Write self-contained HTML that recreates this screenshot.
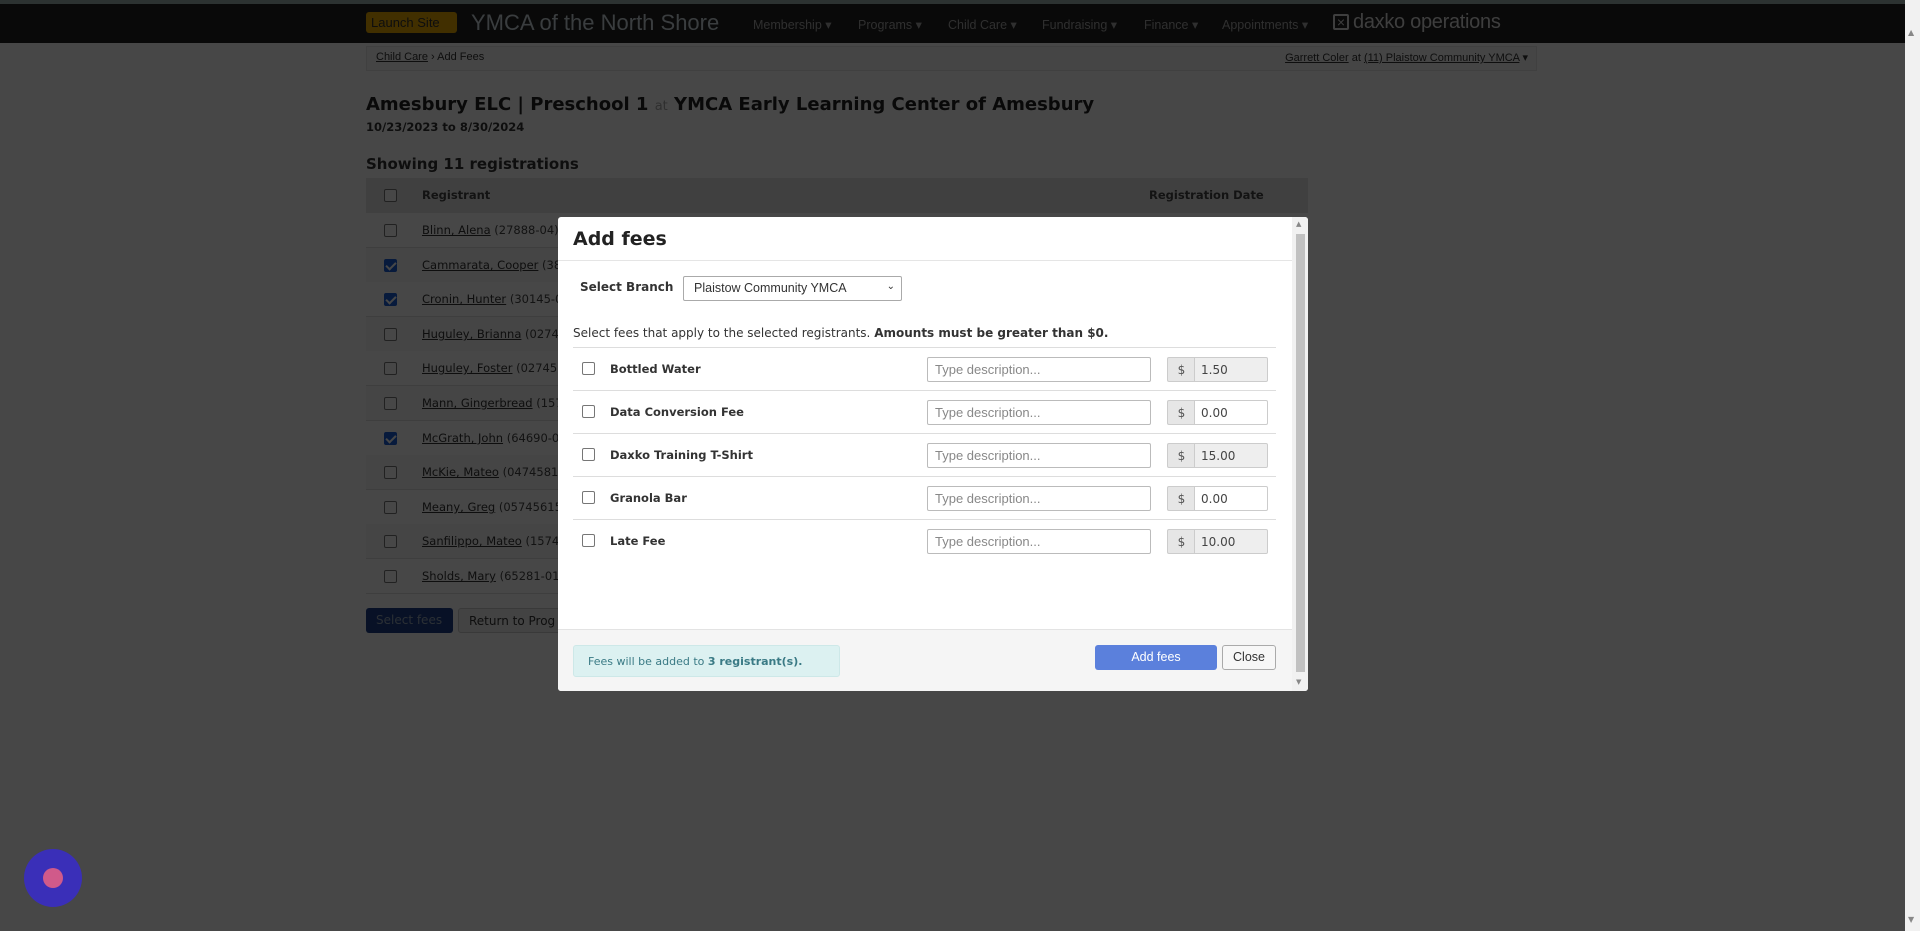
<!DOCTYPE html>
<html><head><meta charset="utf-8"><style>
*{box-sizing:border-box;margin:0;padding:0}
body{width:1920px;height:931px;overflow:hidden;background:#fff;font-family:"DejaVu Sans","Liberation Sans",sans-serif;position:relative;color:#333}
.a{position:absolute;white-space:nowrap}
.nav{left:0;top:4px;width:1920px;height:39px;background:#202020}
.topstrip{left:0;top:0;width:1920px;height:4px;background:#9fb5b0}
.ni{top:17px;font-size:12.5px;color:#aaa;font-family:"Liberation Sans",sans-serif}
.row{left:366px;width:942px;height:35px;border-bottom:1px solid #ddd;background:#fff}
.row.alt{background:#f7f7f7}
.cb{position:absolute;left:18px;top:11px;width:13px;height:13px;border:1px solid #777;border-radius:2px;background:#fff}
.cb.on{background:#1a5fd6;border-color:#1a5fd6}
.cb.on:after{content:"";position:absolute;left:3px;top:0px;width:4px;height:8px;border:solid #fff;border-width:0 2px 2px 0;transform:rotate(45deg)}
.rn{position:absolute;left:56px;top:10px;font-size:11.5px;color:#444}
.rn u{color:#333}
.ov{left:0;top:0;width:1920px;height:931px;background:rgba(0,0,0,.72)}
.modal{left:558px;top:217px;width:750px;height:474px;background:#fff;border-radius:3px;overflow:hidden}
.fr{position:absolute;left:15px;width:703px;height:43px;border-top:1px solid #ddd}
.fr .c{position:absolute;left:9px;top:14px;width:13px;height:13px;border:1px solid #767676;border-radius:2px}
.fr .l{position:absolute;left:37px;top:14px;font-size:11.5px;font-weight:bold;color:#333}
.fr .d{position:absolute;left:354px;top:9px;width:224px;height:25px;border:1px solid #bbb;border-radius:2px;font-size:13px;color:#888;padding:4px 7px;font-family:"Liberation Sans",sans-serif}
.fr .s{position:absolute;left:594px;top:9px;width:28px;height:25px;border:1px solid #ccc;border-right:none;background:#e6e6e6;border-radius:2px 0 0 2px;font-size:12px;color:#555;text-align:center;padding-top:5px}
.fr .v{position:absolute;left:621px;top:9px;width:74px;height:25px;border:1px solid #ccc;border-radius:0 2px 2px 0;font-size:12px;color:#444;padding:5px 6px}
.fr .v.g{background:#eee}
</style></head><body>
<div class="a topstrip"></div>
<div class="a nav"></div>
<div class="a" style="left:366px;top:12px;width:91px;height:21px;background:#e8a800;border-radius:3px;font-size:13px;color:#333;padding:3px 5px;font-family:'Liberation Sans',sans-serif">Launch Site</div>
<div class="a" style="left:471px;top:10px;font-size:22px;color:#cfdbe0;font-family:'Liberation Sans',sans-serif">YMCA of the North Shore</div>
<div class="a ni" style="left:753px">Membership ▾</div>
<div class="a ni" style="left:858px">Programs ▾</div>
<div class="a ni" style="left:948px">Child Care ▾</div>
<div class="a ni" style="left:1042px">Fundraising ▾</div>
<div class="a ni" style="left:1144px">Finance ▾</div>
<div class="a ni" style="left:1222px">Appointments ▾</div>
<div class="a" style="left:1333px;top:14px;width:16px;height:16px;border:2px solid #ddd;border-radius:2px;color:#ddd;font-size:14px;line-height:12px;text-align:center;font-family:'Liberation Sans',sans-serif">×</div>
<div class="a" style="left:1353px;top:11px;font-size:20px;color:#ddd;font-family:'Liberation Sans',sans-serif;letter-spacing:-0.3px">daxko operations</div>
<div class="a" style="left:366px;top:46px;width:1171px;height:25px;background:#f6f6f6;border:1px solid #e4e4e4"></div>
<div class="a" style="left:376px;top:51px;font-size:11px;color:#333;font-family:'Liberation Sans',sans-serif"><u>Child Care</u> › Add Fees</div>
<div class="a" style="right:392px;top:51px;font-size:11px;color:#333;font-family:'Liberation Sans',sans-serif"><u>Garrett Coler</u> at <u>(11) Plaistow Community YMCA</u> ▾</div>
<div class="a" style="left:366px;top:94px;font-size:18px;font-weight:bold;color:#222">Amesbury ELC | Preschool 1 <span style="font-weight:normal;color:#aaa;font-size:13px">at</span> YMCA Early Learning Center of Amesbury</div>
<div class="a" style="left:366px;top:120px;font-size:11.5px;font-weight:bold;color:#333">10/23/2023 to 8/30/2024</div>
<div class="a" style="left:366px;top:155px;font-size:15px;font-weight:bold;color:#333">Showing 11 registrations</div>
<div class="a" style="left:366px;top:178px;width:942px;height:35px;background:#e5e5e5"><div class="cb"></div><div class="rn" style="font-weight:bold">Registrant</div><div style="position:absolute;left:783px;top:10px;font-size:11.5px;font-weight:bold;color:#444">Registration Date</div></div>
<div class="a row" style="top:213px"><div class="cb"></div><div class="rn"><u>Blinn, Alena</u> (27888-04)</div></div>
<div class="a row alt" style="top:248px"><div class="cb on"></div><div class="rn"><u>Cammarata, Cooper</u> (38</div></div>
<div class="a row" style="top:282px"><div class="cb on"></div><div class="rn"><u>Cronin, Hunter</u> (30145-0</div></div>
<div class="a row alt" style="top:317px"><div class="cb"></div><div class="rn"><u>Huguley, Brianna</u> (02745</div></div>
<div class="a row" style="top:351px"><div class="cb"></div><div class="rn"><u>Huguley, Foster</u> (027456</div></div>
<div class="a row alt" style="top:386px"><div class="cb"></div><div class="rn"><u>Mann, Gingerbread</u> (157</div></div>
<div class="a row" style="top:421px"><div class="cb on"></div><div class="rn"><u>McGrath, John</u> (64690-0</div></div>
<div class="a row alt" style="top:455px"><div class="cb"></div><div class="rn"><u>McKie, Mateo</u> (04745816</div></div>
<div class="a row" style="top:490px"><div class="cb"></div><div class="rn"><u>Meany, Greg</u> (05745615</div></div>
<div class="a row alt" style="top:524px"><div class="cb"></div><div class="rn"><u>Sanfilippo, Mateo</u> (15745</div></div>
<div class="a row" style="top:559px"><div class="cb"></div><div class="rn"><u>Sholds, Mary</u> (65281-01</div></div>
<div class="a" style="left:366px;top:608px;width:87px;height:25px;background:#1e3f8a;border-radius:3px;color:#9ab;font-size:12px;padding:5px 10px">Select fees</div>
<div class="a" style="left:458px;top:608px;width:110px;height:25px;background:#f0f0f0;border:1px solid #ccc;border-radius:3px;color:#333;font-size:12px;padding:5px 10px">Return to Prog</div>
<div class="a ov"></div>
<div class="a" style="left:24px;top:849px;width:58px;height:58px;border-radius:50%;background:#3a2fb8"></div>
<div class="a" style="left:43px;top:868px;width:20px;height:20px;border-radius:50%;background:#d05a8a"></div>
<div class="a" style="left:1905px;top:0;width:15px;height:931px;background:#f1f1f1"></div>
<div class="a" style="left:1908px;top:28px;font-size:8px;color:#888">▲</div>
<div class="a" style="left:1908px;top:915px;font-size:8px;color:#888">▼</div>
<div class="a modal">
 <div class="a" style="left:15px;top:11px;font-size:19px;font-weight:bold;color:#222">Add fees</div>
 <div class="a" style="left:0;top:43px;width:734px;border-top:1px solid #e5e5e5"></div>
 <div class="a" style="left:22px;top:63px;font-size:12px;font-weight:bold;color:#333">Select Branch</div>
 <div class="a" style="left:125px;top:59px;width:219px;height:25px;border:1px solid #aaa;border-radius:2px;font-size:12.5px;color:#333;padding:4px 10px;font-family:'Liberation Sans',sans-serif">Plaistow Community YMCA<span style="position:absolute;right:6px;top:4px;font-size:10px">⌄</span></div>
 <div class="a" style="left:15px;top:109px;font-size:12px;color:#333">Select fees that apply to the selected registrants. <b>Amounts must be greater than $0.</b></div>
 <div class="fr" style="top:130px"><div class="c"></div><div class="l">Bottled Water</div><div class="d">Type description...</div><div class="s">$</div><div class="v g">1.50</div></div>
 <div class="fr" style="top:173px"><div class="c"></div><div class="l">Data Conversion Fee</div><div class="d">Type description...</div><div class="s">$</div><div class="v">0.00</div></div>
 <div class="fr" style="top:216px"><div class="c"></div><div class="l">Daxko Training T-Shirt</div><div class="d">Type description...</div><div class="s">$</div><div class="v g">15.00</div></div>
 <div class="fr" style="top:259px"><div class="c"></div><div class="l">Granola Bar</div><div class="d">Type description...</div><div class="s">$</div><div class="v">0.00</div></div>
 <div class="fr" style="top:302px"><div class="c"></div><div class="l">Late Fee</div><div class="d">Type description...</div><div class="s">$</div><div class="v g">10.00</div></div>
 <div class="a" style="left:0;top:412px;width:734px;height:62px;background:#f5f5f5;border-top:1px solid #e3e3e3"></div>
 <div class="a" style="left:15px;top:428px;width:267px;height:32px;background:#dcf1f1;border:1px solid #cde8e8;border-radius:3px;font-size:11px;color:#3a7a85;padding:9px 14px">Fees will be added to <b>3 registrant(s).</b></div>
 <div class="a" style="left:537px;top:428px;width:122px;height:25px;background:#5b80dc;border-radius:3px;color:#fff;font-size:12.5px;text-align:center;padding-top:5px;font-family:'Liberation Sans',sans-serif">Add fees</div>
 <div class="a" style="left:664px;top:428px;width:54px;height:25px;background:#f7f7f7;border:1px solid #aaa;border-radius:3px;color:#333;font-size:12.5px;text-align:center;padding-top:4px;font-family:'Liberation Sans',sans-serif">Close</div>
 <div class="a" style="left:734px;top:0;width:16px;height:474px;background:#f1f1f1"></div>
 <div class="a" style="left:738px;top:17px;width:9px;height:438px;background:#c1c1c1"></div>
 <div class="a" style="left:738px;top:3px;font-size:7px;color:#888">▲</div>
 <div class="a" style="left:738px;top:461px;font-size:7px;color:#888">▼</div>
</div>
</body></html>
